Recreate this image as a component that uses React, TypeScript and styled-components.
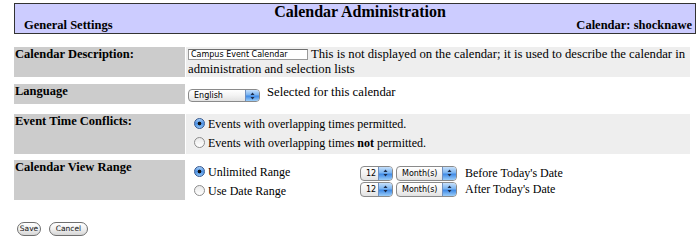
import styled, { createGlobalStyle } from 'styled-components';

const GlobalStyle = createGlobalStyle`
    body {
        margin: 0;
        background: #ffffff;
        font-family: "Liberation Serif", "Times New Roman", serif;
        font-size: 12.7px;
        color: #000000;
    }
`;

export default function App() {
    return (
        <Page>
            <GlobalStyle />
            <Header>
                <Title>Calendar Administration</Title>
                <SubRow>
                    <span>General Settings</span>
                    <span>Calendar: shocknawe</span>
                </SubRow>
            </Header>

            <Row $top={13} $shade>
                <Label>Calendar Description:</Label>
                <Value $pad="0 2px" $line={15}>
                    <TextInput readOnly value="Campus Event Calendar" /> This is not displayed on the calendar; it is used to describe the calendar in administration and selection lists
                </Value>
            </Row>

            <Row $top={7}>
                <Label>Language</Label>
                <Value $pad="2px" $line={13}>
                    <Select $w={72}>English</Select>Selected for this calendar
                </Value>
            </Row>

            <Row $top={10} $shade>
                <Label>Event Time Conflicts:</Label>
                <Value $pad="1px 8px" $line={19}>
                    <RadioLine><Radio $on />Events with overlapping times permitted.</RadioLine>
                    <RadioLine><Radio />Events with overlapping times <b>not</b> permitted.</RadioLine>
                </Value>
            </Row>

            <Row $top={6}>
                <Label>Calendar View Range</Label>
                <RangeValue>
                    <div>
                        <RadioLine><Radio $on />Unlimited Range</RadioLine>
                        <RadioLine><Radio />Use Date Range</RadioLine>
                    </div>
                    <div>
                        <RangeLine>
                            <Select $w={33}>12</Select>
                            <Select $w={61}>Month(s)</Select>
                            <RangeText>Before Today's Date</RangeText>
                        </RangeLine>
                        <RangeLine>
                            <Select $w={33}>12</Select>
                            <Select $w={61}>Month(s)</Select>
                            <RangeText>After Today's Date</RangeText>
                        </RangeLine>
                    </div>
                </RangeValue>
            </Row>

            <Buttons>
                <AquaButton $w={24}>Save</AquaButton>
                <AquaButton $w={39}>Cancel</AquaButton>
            </Buttons>
        </Page>
    );
}

function Select({ $w, children }: { $w: number; children: React.ReactNode }) {
    return (
        <SelectBox $w={$w}>
            <SelectText>{children}</SelectText>
            <SelectArrow>
                <svg width="5" height="8" viewBox="0 0 5 8">
                    <path d="M2.5 0.5 L4.5 3 L0.5 3 Z" fill="#1c2b48" />
                    <path d="M2.5 7.5 L4.5 5 L0.5 5 Z" fill="#1c2b48" />
                </svg>
            </SelectArrow>
        </SelectBox>
    );
}

const Page = styled.div`
    padding: 3px 4px 0 14px;
    width: 700px;
    box-sizing: border-box;
`;

const Header = styled.div`
    border: 1px solid #333333;
    background: #ccccff;
    height: 31px;
    box-sizing: border-box;
    padding: 0 3px 0 9px;
    font-weight: bold;
`;

const Title = styled.div`
    text-align: center;
    font-size: 16px;
    line-height: 14px;
    padding: 1px 0 0 4px;
`;

const SubRow = styled.div`
    display: flex;
    justify-content: space-between;
    font-size: 12.5px;
    line-height: 13px;
`;

const Row = styled.div<{ $top: number; $shade?: boolean }>`
    display: grid;
    grid-template-columns: 171px 504px;
    column-gap: 1px;
    margin-top: ${p => p.$top}px;
    background: #ffffff;
    & > *:last-child {
        background: ${p => (p.$shade ? '#eeeeee' : '#ffffff')};
    }
`;

const Label = styled.div`
    background: #cccccc;
    font-weight: bold;
    font-size: 12.5px;
    line-height: 15px;
    padding: 0 1px;
`;

const Value = styled.div<{ $pad: string; $line: number }>`
    padding: ${p => p.$pad};
    line-height: ${p => p.$line}px;
`;

const TextInput = styled.input`
    width: 120px;
    height: 11px;
    box-sizing: border-box;
    margin: 0;
    border: 1px solid #9a9a9a;
    border-top-color: #6f6f6f;
    background: #ffffff;
    font-family: "DejaVu Sans", sans-serif;
    font-size: 8px;
    line-height: 9px;
    padding: 0 2px;
    vertical-align: 1px;
    color: #000000;
    outline: none;
`;

const SelectBox = styled.span<{ $w: number }>`
    display: inline-flex;
    width: ${p => p.$w}px;
    height: 13px;
    box-sizing: border-box;
    border: 1px solid #8a8a8a;
    border-radius: 4px;
    background: linear-gradient(#ffffff, #f3f3f3 50%, #e2e2e2);
    overflow: hidden;
    vertical-align: -2px;
    margin-right: 7px;
    font-family: "DejaVu Sans", sans-serif;
    font-size: 8px;
`;

const SelectText = styled.span`
    flex: 1;
    padding-left: 5px;
    line-height: 11px;
`;

const SelectArrow = styled.span`
    width: 13px;
    display: flex;
    align-items: center;
    justify-content: center;
    border-left: 1px solid #6f8fbf;
    background: linear-gradient(#c6e0fb, #79b3f0 45%, #3f8ae6 55%, #9bcdf8);
`;

const RadioLine = styled.div`
    line-height: 19px;
    font-size: 12px;
    white-space: nowrap;
`;

const Radio = styled.span<{ $on?: boolean }>`
    display: inline-block;
    width: 11px;
    height: 11px;
    box-sizing: border-box;
    border-radius: 50%;
    margin-right: 3px;
    vertical-align: -1px;
    border: 1px solid ${p => (p.$on ? '#34578f' : '#8c8c8c')};
    background: ${p =>
        p.$on
            ? 'radial-gradient(circle, #111 0 1.5px, transparent 2.2px), linear-gradient(#a9d0f8, #4a8fe3 50%, #8fc6f8)'
            : 'linear-gradient(#e9e9e9, #ffffff)'};
`;

const RangeValue = styled.div`
    display: grid;
    grid-template-columns: 166px auto;
    align-content: start;
    height: 40px;
    box-sizing: border-box;
    padding: 3px 8px 0;
`;

const RangeLine = styled.div`
    display: flex;
    align-items: center;
    gap: 3px;
    height: 16px;
    &:first-child {
        margin-top: 2px;
    }
    ${SelectBox} {
        height: 15px;
        margin-right: 0;
    }
    ${SelectText} {
        line-height: 13px;
    }
`;

const RangeText = styled.span`
    margin-left: 5px;
    font-size: 12px;
    line-height: 15px;
`;

const Buttons = styled.div`
    display: flex;
    gap: 8px;
    margin: 22px 0 0 3px;
`;

const AquaButton = styled.button<{ $w: number }>`
    width: ${p => p.$w}px;
    height: 14px;
    padding: 0;
    border: 1px solid #6f6f6f;
    border-radius: 7px;
    background: linear-gradient(#ffffff, #f0f0f0 50%, #d6d6d6);
    font-family: "DejaVu Sans", sans-serif;
    font-size: 7.5px;
    line-height: 12px;
    color: #111111;
`;
